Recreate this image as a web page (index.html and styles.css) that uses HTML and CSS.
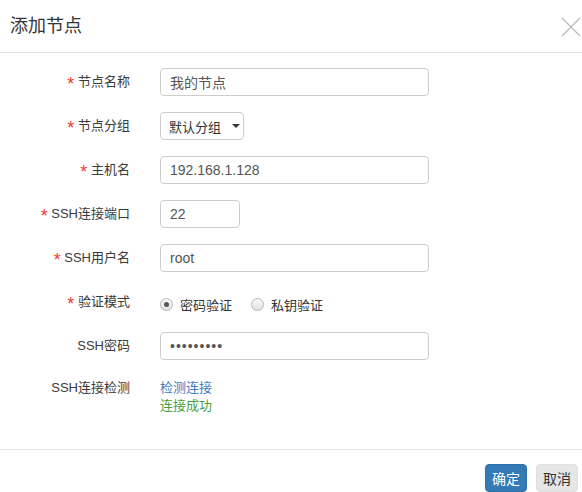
FILE: index.html
```html
<!DOCTYPE html>
<html lang="zh">
<head>
<meta charset="utf-8">
<title>添加节点</title>
<link rel="stylesheet" href="styles.css">
</head>
<body>
<div class="modal">
  <div class="modal-header">
    <h4 class="modal-title">添加节点</h4>
    <span class="close" aria-label="关闭">
      <svg width="20" height="20" viewBox="0 0 20 20"><path d="M1 1 L19 19 M19 1 L1 19" stroke="#bdbdbd" stroke-width="1.4" fill="none"/></svg>
    </span>
  </div>
  <div class="modal-body">
    <div class="form-group">
      <label class="control-label"><span class="req">*</span> 节点名称</label>
      <div class="control"><input class="form-control" type="text" value="我的节点"></div>
    </div>
    <div class="form-group">
      <label class="control-label"><span class="req">*</span> 节点分组</label>
      <div class="control"><div class="select">默认分组<span class="caret"></span></div></div>
    </div>
    <div class="form-group">
      <label class="control-label"><span class="req">*</span> 主机名</label>
      <div class="control"><input class="form-control" type="text" value="192.168.1.128"></div>
    </div>
    <div class="form-group">
      <label class="control-label"><span class="req">*</span> SSH连接端口</label>
      <div class="control"><input class="form-control port" type="text" value="22"></div>
    </div>
    <div class="form-group">
      <label class="control-label"><span class="req">*</span> SSH用户名</label>
      <div class="control"><input class="form-control" type="text" value="root"></div>
    </div>
    <div class="form-group">
      <label class="control-label"><span class="req">*</span> 验证模式</label>
      <div class="control radios">
        <span class="radio"><span class="dot checked"></span>密码验证</span>
        <span class="radio"><span class="dot"></span>私钥验证</span>
      </div>
    </div>
    <div class="form-group">
      <label class="control-label">SSH密码</label>
      <div class="control"><input class="form-control pwd" type="password" value="123456789"></div>
    </div>
    <div class="form-group check">
      <label class="control-label">SSH连接检测</label>
      <div class="control stack">
        <a class="link" href="#">检测连接</a>
        <span class="success">连接成功</span>
      </div>
    </div>
  </div>
  <div class="modal-footer">
    <button class="btn btn-primary" type="button">确定</button>
    <button class="btn btn-default" type="button">取消</button>
  </div>
</div>
</body>
</html>
```
FILE: styles.css
```css
html, body {
  margin: 0;
  padding: 0;
  background: #fff;
}
body {
  font-family: "Liberation Sans", "Noto Sans CJK SC", sans-serif;
  color: #333;
  font-size: 13px;
}
.modal {
  width: 582px;
}
.modal-header {
  display: flex;
  align-items: center;
  justify-content: space-between;
  height: 52px;
  padding: 0 1px 0 10px;
  border-bottom: 1px solid #e5e5e5;
}
.modal-title {
  margin: 0;
  font-size: 18px;
  font-weight: normal;
  line-height: 22px;
  color: #333;
}
.close {
  display: flex;
  width: 20px;
  height: 20px;
  margin-top: 1px;
}
.modal-body {
  padding: 15px 0 34px;
  display: flex;
  flex-direction: column;
  gap: 16px;
}
.form-group {
  display: flex;
  align-items: center;
  gap: 30px;
  height: 28px;
}
.control-label {
  width: 130px;
  text-align: right;
  font-size: 13px;
  color: #3a3a3a;
  line-height: 28px;
}
.req {
  color: #f03a2e;
  font-size: 18px;
  line-height: 10px;
  vertical-align: -4px;
}
.control {
  display: flex;
  align-items: center;
}
.form-control {
  box-sizing: border-box;
  width: 269px;
  height: 28px;
  padding: 0 9px;
  border: 1px solid #ccc;
  border-radius: 4px;
  font-family: "Liberation Sans", "Noto Sans CJK SC", sans-serif;
  font-size: 14px;
  color: #555;
  background: #fff;
  outline: none;
}
.form-control.port {
  width: 80px;
}
.form-control.pwd {
  letter-spacing: 1px;
  color: #555;
}
.select {
  box-sizing: border-box;
  width: 84px;
  height: 28px;
  padding: 0 0 0 8px;
  border: 1px solid #ccc;
  border-radius: 4px;
  display: flex;
  align-items: center;
  font-size: 13px;
  color: #333;
}
.caret {
  width: 0;
  height: 0;
  margin-left: 11px;
  border-left: 4px solid transparent;
  border-right: 4px solid transparent;
  border-top: 4px solid #333;
}
.radios {
  gap: 19px;
  padding-top: 4px;
}
.radio {
  display: flex;
  align-items: center;
  gap: 7px;
  font-size: 13px;
  color: #333;
}
.dot {
  box-sizing: border-box;
  width: 13px;
  height: 13px;
  border-radius: 50%;
  border: 1px solid #b5b5b5;
  background: linear-gradient(#fafafa, #e2e2e2);
  display: flex;
  align-items: center;
  justify-content: center;
}
.dot.checked::after {
  content: "";
  width: 5px;
  height: 5px;
  border-radius: 50%;
  background: #555;
}
.form-group.check {
  height: 39px;
  align-items: flex-start;
}
.form-group.check .control-label {
  line-height: 18px;
  padding-top: 3px;
}
.stack {
  flex-direction: column;
  align-items: flex-start;
  padding-top: 3px;
  line-height: 18px;
  font-size: 13px;
}
.link {
  color: #3a7dc0;
  text-decoration: none;
}
.success {
  color: #4a9e3a;
}
.modal-footer {
  border-top: 1px solid #e5e5e5;
  padding: 14px 4px 0 0;
  display: flex;
  justify-content: flex-end;
  gap: 9px;
}
.btn {
  box-sizing: border-box;
  height: 28px;
  width: 42px;
  padding: 0;
  border-radius: 4px;
  font-family: "Liberation Sans", "Noto Sans CJK SC", sans-serif;
  font-size: 14px;
  cursor: pointer;
}
.btn-primary {
  background: #337ab7;
  border: 1px solid #2e6da4;
  color: #fff;
}
.btn-default {
  background: #e6e6e6;
  border: 1px solid #e0e0e0;
  color: #333;
}
```
